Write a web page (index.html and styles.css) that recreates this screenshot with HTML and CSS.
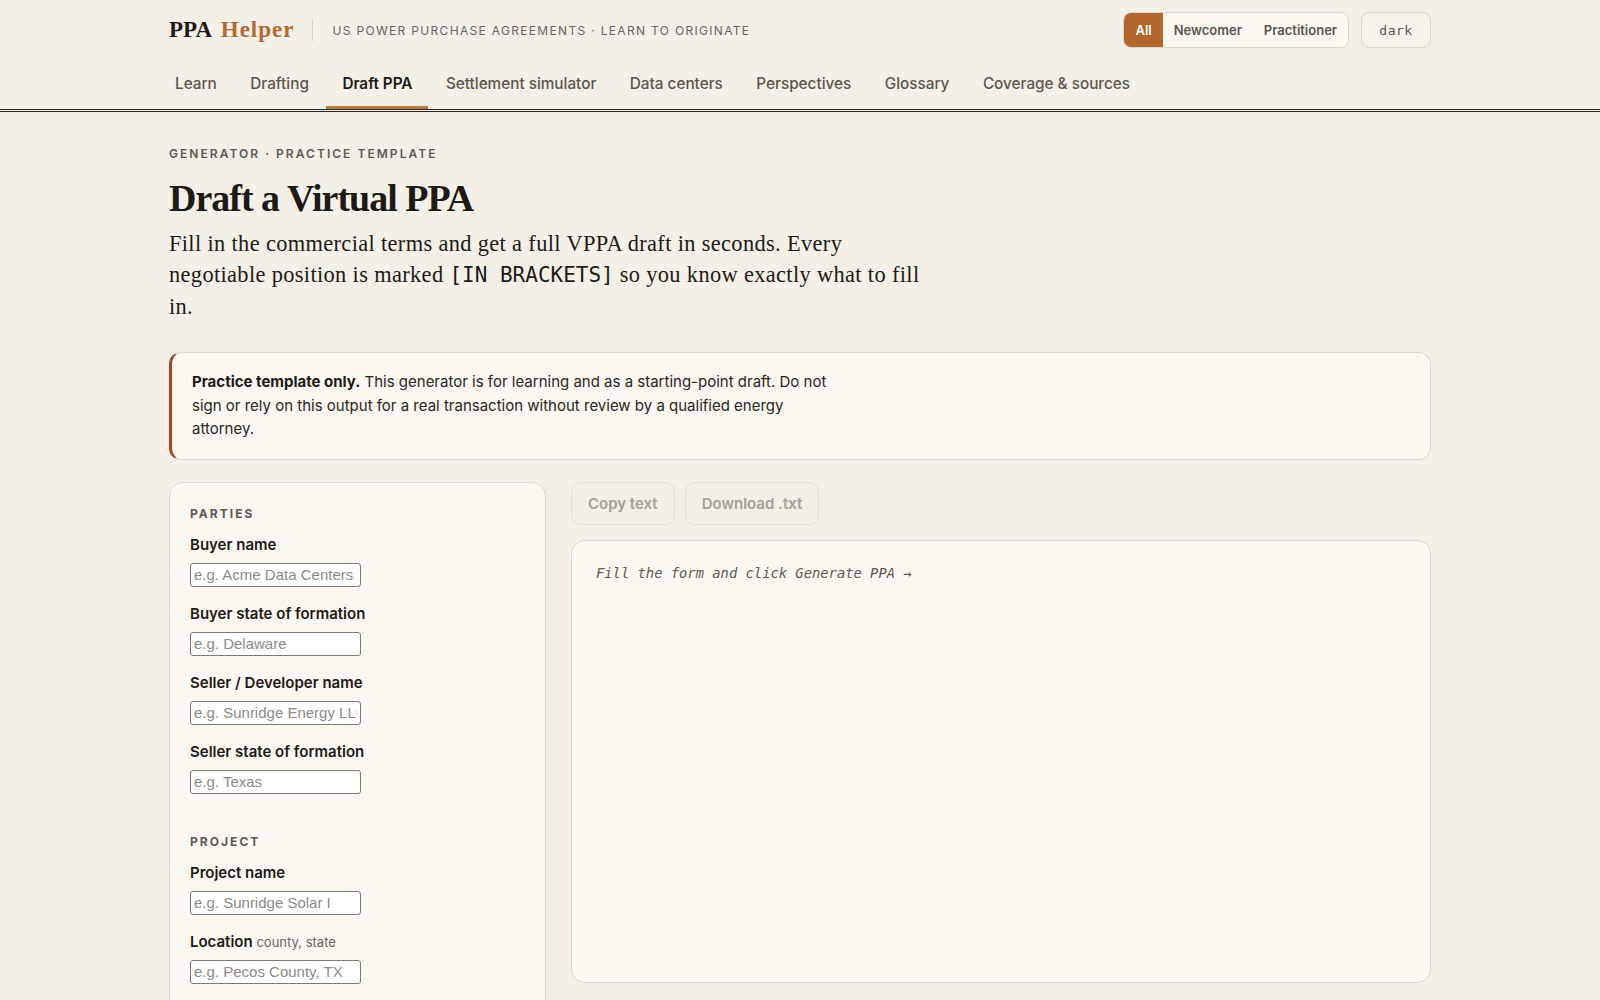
FILE: index.html
```html
<!DOCTYPE html>
<html lang="en">
<head>
    <meta charset="UTF-8">
    <meta name="viewport" content="width=device-width, initial-scale=1.0">
    <title>PPA Helper - Draft PPA</title>
    <link rel="stylesheet" href="styles.css">
</head>
<body>
    <header class="site-header">
        <div class="wrap">
            <div class="top-row">
                <div class="brand">
                    <span class="logo"><b>PPA</b> <span class="logo-accent">Helper</span></span>
                    <span class="tagline">US power purchase agreements · learn to originate</span>
                </div>
                <div class="controls">
                    <div class="audience">
                        <button class="seg active">All</button>
                        <button class="seg">Newcomer</button>
                        <button class="seg">Practitioner</button>
                    </div>
                    <button class="theme-btn">dark</button>
                </div>
            </div>
            <nav class="tabs">
                <a href="#" class="tab">Learn</a>
                <a href="#" class="tab">Drafting</a>
                <a href="#" class="tab active">Draft PPA</a>
                <a href="#" class="tab">Settlement simulator</a>
                <a href="#" class="tab">Data centers</a>
                <a href="#" class="tab">Perspectives</a>
                <a href="#" class="tab">Glossary</a>
                <a href="#" class="tab">Coverage &amp; sources</a>
            </nav>
        </div>
    </header>

    <main class="wrap">
        <section class="intro">
            <div class="eyebrow">Generator · practice template</div>
            <h1>Draft a Virtual PPA</h1>
            <p class="lede">Fill in the commercial terms and get a full VPPA draft in seconds. Every negotiable position is marked <code>[IN BRACKETS]</code> so you know exactly what to fill in.</p>
        </section>

        <div class="notice">
            <p><strong>Practice template only.</strong> This generator is for learning and as a starting-point draft. Do not sign or rely on this output for a real transaction without review by a qualified energy attorney.</p>
        </div>

        <div class="generator">
            <form class="form-card" onsubmit="return false;">
                <fieldset>
                    <legend>Parties</legend>
                    <label class="field">
                        <span class="label">Buyer name</span>
                        <input type="text" placeholder="e.g. Acme Data Centers">
                    </label>
                    <label class="field">
                        <span class="label">Buyer state of formation</span>
                        <input type="text" placeholder="e.g. Delaware">
                    </label>
                    <label class="field">
                        <span class="label">Seller / Developer name</span>
                        <input type="text" placeholder="e.g. Sunridge Energy LLC">
                    </label>
                    <label class="field">
                        <span class="label">Seller state of formation</span>
                        <input type="text" placeholder="e.g. Texas">
                    </label>
                </fieldset>

                <fieldset>
                    <legend>Project</legend>
                    <label class="field">
                        <span class="label">Project name</span>
                        <input type="text" placeholder="e.g. Sunridge Solar I">
                    </label>
                    <label class="field">
                        <span class="label">Location <small>county, state</small></span>
                        <input type="text" placeholder="e.g. Pecos County, TX">
                    </label>
                </fieldset>
            </form>

            <div class="output-col">
                <div class="actions">
                    <button class="ghost-btn" disabled>Copy text</button>
                    <button class="ghost-btn" disabled>Download .txt</button>
                </div>
                <div class="output">
                    <pre class="placeholder">Fill the form and click Generate PPA →</pre>
                </div>
            </div>
        </div>
    </main>
</body>
</html>
```

FILE: styles.css
```css
* {
    box-sizing: border-box;
}
body {
    margin: 0;
    background-color: #f3f0e8;
    color: #1d1a16;
    font-family: Inter, "Noto Sans", sans-serif;
}
.wrap {
    max-width: 1310px;
    margin: 0 auto;
    padding: 0 24px;
}

/* header */
.site-header {
    border-bottom: 3px double #2a2520;
}
.top-row {
    display: flex;
    justify-content: space-between;
    align-items: center;
    padding-top: 12px;
}
.brand {
    display: flex;
    align-items: center;
}
.logo {
    font-family: "Liberation Serif", serif;
    font-size: 23px;
    color: #1d1a16;
    padding-right: 18px;
    border-right: 1px solid #d9d1c2;
    line-height: 22px;
    word-spacing: 3px;
}
.logo-accent {
    color: #b3692f;
    font-weight: bold;
    letter-spacing: 1px;
}
.tagline {
    padding-left: 19px;
    font-size: 12px;
    letter-spacing: 0.11em;
    text-transform: uppercase;
    color: #6b655b;
}
.controls {
    display: flex;
    gap: 12px;
}
.audience {
    display: flex;
    height: 36px;
    border: 1px solid #ddd5c6;
    border-radius: 8px;
    background: #faf8f1;
    overflow: hidden;
}
.seg {
    border: none;
    background: none;
    font-family: Inter, sans-serif;
    font-size: 13px;
    font-weight: 600;
    color: #5a544a;
    padding: 0 11px;
    cursor: pointer;
}
.seg.active {
    background: #b3662c;
    color: #ffffff;
}
.theme-btn {
    height: 36px;
    width: 70px;
    border: 1px solid #ddd5c6;
    border-radius: 8px;
    background: #f5f2ea;
    font-family: "DejaVu Sans Mono", monospace;
    font-size: 13px;
    color: #5a544a;
    letter-spacing: 0.04em;
    cursor: pointer;
}
.tabs {
    display: flex;
    gap: 1.5px;
    margin-top: 12px;
    margin-left: -10px;
}
.tab {
    padding: 14px 16px 12px;
    border-bottom: 3px solid transparent;
    font-size: 15.3px;
    line-height: 20px;
    font-weight: 500;
    color: #5c564c;
    text-decoration: none;
}
.tab.active {
    color: #1d1a16;
    font-weight: 600;
    border-bottom-color: #b87a3d;
}

/* intro */
.intro {
    padding-top: 34px;
}
.eyebrow {
    font-size: 12px;
    font-weight: 600;
    letter-spacing: 0.17em;
    text-transform: uppercase;
    color: #5f594f;
}
h1 {
    font-family: "Liberation Serif", serif;
    font-size: 38px;
    letter-spacing: -1px;
    margin: 15px 0 8px;
    line-height: 44px;
}
.lede {
    font-family: "Liberation Serif", serif;
    font-size: 22.4px;
    letter-spacing: 0.35px;
    line-height: 31px;
    max-width: 766px;
    margin: 0;
}
.lede code {
    font-family: "DejaVu Sans Mono", monospace;
    font-size: 21px;
    letter-spacing: 0;
}

/* notice */
.notice {
    margin-top: 30px;
    background: #faf8f1;
    border: 1px solid #ddd6c9;
    border-left: 3px solid #a8432a;
    border-radius: 12px;
    padding: 17px 20px 18px;
}
.notice p {
    margin: 0;
    max-width: 640px;
    font-size: 15px;
    line-height: 23.5px;
    color: #2a2620;
}
.notice strong {
    color: #1d1a16;
}

/* generator */
.generator {
    display: grid;
    grid-template-columns: 377px 1fr;
    gap: 25px;
    margin-top: 22px;
    align-items: start;
}
.form-card {
    background: #faf8f1;
    border: 1px solid #ddd6c9;
    border-radius: 14px;
    padding: 23px 20px 24px;
}
fieldset {
    border: none;
    margin: 0 0 23px;
    padding: 0;
}
legend {
    padding: 0;
    margin-bottom: 14px;
    font-size: 12px;
    font-weight: 700;
    letter-spacing: 0.17em;
    text-transform: uppercase;
    color: #5f594f;
}
.field {
    display: block;
    margin-bottom: 17px;
}
.label {
    display: block;
    font-size: 15px;
    line-height: 20px;
    font-weight: 600;
    color: #1d1a16;
    margin-bottom: 8px;
}
.label small {
    font-size: 13px;
    font-weight: 400;
    color: #6b655b;
}
input {
    display: block;
    width: 171px;
    height: 24px;
    padding: 1px 3px;
    border: 1px solid #7c7a76;
    border-radius: 3px;
    background: #ffffff;
    font-family: "Liberation Sans", Arial, sans-serif;
    font-size: 15px;
    color: #1d1a16;
}
input::placeholder {
    color: #8d8b87;
}
.output-col {
    display: flex;
    flex-direction: column;
    gap: 15px;
}
.actions {
    display: flex;
    gap: 10px;
}
.ghost-btn {
    height: 43px;
    padding: 0 16px;
    border: 1px solid #e6e0d3;
    border-radius: 9px;
    background: #f2efe6;
    font-family: Inter, sans-serif;
    font-size: 15px;
    font-weight: 600;
    color: #a7a095;
}
.output {
    min-height: 443px;
    background: #faf8f1;
    border: 1px solid #ddd6c9;
    border-radius: 14px;
    padding: 24px 24px;
}
.placeholder {
    margin: 0;
    font-family: "DejaVu Sans Mono", monospace;
    font-style: italic;
    font-size: 13.8px;
    color: #5f594f;
}
```
